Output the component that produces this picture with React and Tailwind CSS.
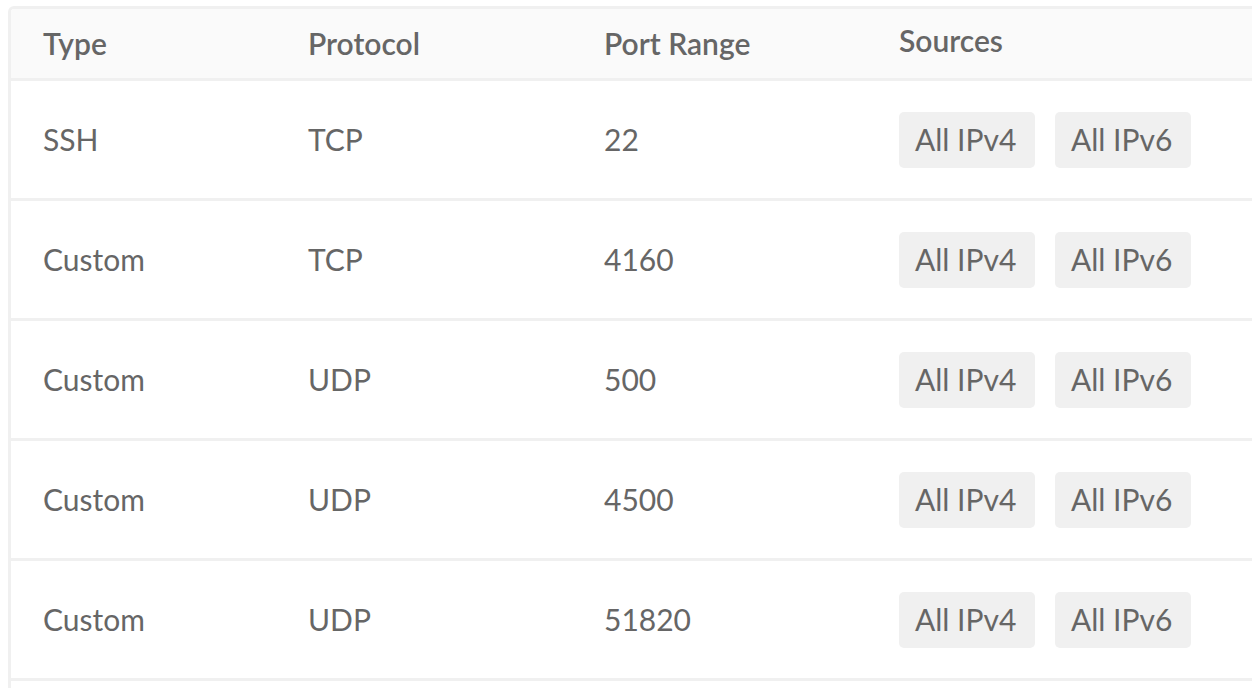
const RULES = [
  { type: 'SSH', protocol: 'TCP', ports: '22' },
  { type: 'Custom', protocol: 'TCP', ports: '4160' },
  { type: 'Custom', protocol: 'UDP', ports: '500' },
  { type: 'Custom', protocol: 'UDP', ports: '4500' },
  { type: 'Custom', protocol: 'UDP', ports: '51820' },
];

const SOURCES = ['All IPv4', 'All IPv6'];

const gridCols = 'grid grid-cols-[265px_296px_295px_1fr]';

export default function App() {
  return (
    <div className="w-[1252px] h-[688px] overflow-hidden bg-white pl-[8px] pt-[6px] text-[#666666]" style={{ fontFamily: 'Lato, "Open Sans", sans-serif' }}>
      <div className="w-[1400px] h-[720px] border-l-[3px] border-t-[3px] border-[#f0f0f0] rounded-tl-[6px] overflow-hidden">
        <div className={`${gridCols} h-[72px] bg-[#fafafa] border-b-[3px] border-[#f0f0f0] items-center text-[30px] font-semibold`}>
          <div className="pl-[32px]">Type</div>
          <div className="pl-[32px]">Protocol</div>
          <div className="pl-[32px]">Port Range</div>
          <div className="pl-[32px] -mt-[6px]">Sources</div>
        </div>
        {RULES.map((r, i) => (
          <div key={i} className={`${gridCols} h-[120px] border-b-[3px] border-[#f0f0f0] items-center text-[30px]`}>
            <div className="pl-[32px]">{r.type}</div>
            <div className="pl-[32px]">{r.protocol}</div>
            <div className="pl-[32px]">{r.ports}</div>
            <div className="pl-[32px] flex gap-[20px]">
              {SOURCES.map((s) => (
                <span key={s} className="h-[56px] w-[136px] flex items-center px-[16px] bg-[#f0f0f0] rounded-[5px]">{s}</span>
              ))}
            </div>
          </div>
        ))}
      </div>
    </div>
  );
}
